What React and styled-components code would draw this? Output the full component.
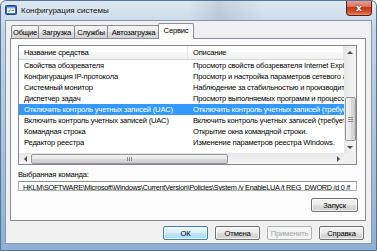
import React from 'react'
import styled, { createGlobalStyle, css } from 'styled-components'

const GlobalStyle = createGlobalStyle`
    html, body {
        margin: 0;
        padding: 0;
        overflow: hidden;
    }
    body {
        font-family: "Liberation Sans", Arial, sans-serif;
        font-size: 7.6px;
        letter-spacing: -0.2px;
        color: #000;
    }
`

const TABS = [
    { id: 'general', label: 'Общие', width: 28 },
    { id: 'boot', label: 'Загрузка', width: 37 },
    { id: 'services', label: 'Службы', width: 34 },
    { id: 'startup', label: 'Автозагрузка', width: 53 },
    { id: 'tools', label: 'Сервис', width: 33, active: true },
]

const TOOLS = [
    { name: 'Свойства обозревателя', desc: 'Просмотр свойств обозревателя Internet Explorer' },
    { name: 'Конфигурация IP-протокола', desc: 'Просмотр и настройка параметров сетевого адаптера' },
    { name: 'Системный монитор', desc: 'Наблюдение за стабильностью и производительностью' },
    { name: 'Диспетчер задач', desc: 'Просмотр выполняемых программ и процессов и их' },
    { name: 'Отключить контроль учетных записей (UAC)', desc: 'Отключить контроль учетных записей (требуется перезагрузка)', selected: true },
    { name: 'Включить контроль учетных записей (UAC)', desc: 'Включить контроль учетных записей (требуется перезагрузка)' },
    { name: 'Командная строка', desc: 'Открытие окна командной строки.' },
    { name: 'Редактор реестра', desc: 'Изменение параметров реестра Windows.' },
]

const COMMAND = 'HKLM\\SOFTWARE\\Microsoft\\Windows\\CurrentVersion\\Policies\\System /v EnableLUA /t REG_DWORD /d 0 /f'

const Window = styled.div`
    width: 377px;
    height: 251px;
    box-sizing: border-box;
    display: flex;
    flex-direction: column;
    border: 1px solid #54769c;
    border-radius: 6px 6px 0 0;
    background: linear-gradient(180deg, #dfe8f1 0%, #c3d4e6 12%, #aac3dd 55%, #8fb0d3 100%);
    overflow: hidden;
`

const TitleBar = styled.div`
    height: 19px;
    display: flex;
    align-items: flex-start;
    flex-shrink: 0;
    background: linear-gradient(90deg, rgba(255,255,255,0) 0%, rgba(255,255,255,0) 50%, rgba(120,140,160,0.25) 58%, rgba(255,255,255,0) 70%);
`

const AppIcon = styled.svg`
    width: 12px;
    height: 12px;
    margin: 3px 4px 0 4px;
    flex-shrink: 0;
`

const Title = styled.div`
    font-size: 8px;
    letter-spacing: 0;
    line-height: 19px;
    color: #111;
    text-shadow: 0 0 6px rgba(255,255,255,0.9);
`

const CloseButton = styled.div`
    margin-left: auto;
    margin-right: 4px;
    margin-top: -1px;
    width: 26px;
    height: 16px;
    box-sizing: border-box;
    border: 1px solid #5b1f1a;
    border-top: none;
    border-radius: 0 0 4px 4px;
    background: linear-gradient(180deg, #e9a799 0%, #d9735f 45%, #c2391c 50%, #d3552f 80%, #e88d5c 100%);
    display: flex;
    align-items: center;
    justify-content: center;
    color: #fff;
    font-family: "DejaVu Sans", sans-serif;
    font-weight: bold;
    font-size: 9px;
    letter-spacing: 0;
    text-shadow: 0 0 2px #5b1f1a;
`

const Client = styled.div`
    flex: 1;
    margin: 0 4px 6px 4px;
    background: #f0f0f0;
    border: 1px solid #8397ad;
    display: flex;
    flex-direction: column;
    padding: 2px 5px 3px 4px;
    min-height: 0;
`

const TabStrip = styled.div`
    display: flex;
    align-items: flex-end;
    height: 15px;
    padding-left: 2px;
    position: relative;
    z-index: 1;
`

const Tab = styled.div`
    box-sizing: border-box;
    height: 13px;
    width: ${p => p.$width}px;
    margin-left: -1px;
    border: 1px solid #898c95;
    border-bottom: none;
    border-radius: 2px 2px 0 0;
    background: linear-gradient(180deg, #f3f3f3 0%, #ebebeb 45%, #dedede 50%, #d3d3d3 100%);
    display: flex;
    align-items: center;
    justify-content: center;
    white-space: nowrap;

    ${p => p.$active && css`
        height: 16px;
        width: ${p.$width + 3}px;
        margin-left: -2px;
        margin-right: -1px;
        margin-bottom: -1px;
        background: #fcfcfc;
        padding-bottom: 2px;
        z-index: 2;
    `}
`

const Panel = styled.div`
    flex: 1;
    display: flex;
    flex-direction: column;
    background: #fcfcfc;
    border: 1px solid #898c95;
    padding: 6px 8px 8px 7px;
    min-height: 0;
`

const ListView = styled.div`
    height: 120px;
    box-sizing: border-box;
    border: 1px solid #828790;
    background: #fff;
    display: grid;
    grid-template-columns: 1fr 12px;
    grid-template-rows: 1fr 11px;
    flex-shrink: 0;
`

const ListBody = styled.div`
    overflow: hidden;
    min-width: 0;
`

const HeaderRow = styled.div`
    display: flex;
    height: 14px;
    box-sizing: border-box;
    border-bottom: 1px solid #d5d5d5;
    background: linear-gradient(180deg, #ffffff 0%, #ffffff 50%, #f7f8fa 50%, #f1f2f4 100%);
`

const HeaderCell = styled.div`
    width: ${p => p.$width ? `${p.$width}px` : 'auto'};
    flex: ${p => p.$width ? '0 0 auto' : 1};
    box-sizing: border-box;
    padding-left: 5px;
    line-height: 13px;
    border-right: 1px solid #e3e4e6;
    white-space: nowrap;
`

const Row = styled.div`
    display: flex;
    height: 11px;
    line-height: 11px;
    white-space: nowrap;
    background: ${p => p.$selected ? '#3399ff' : 'transparent'};
    color: ${p => p.$selected ? '#fff' : '#000'};
`

const Cell = styled.div`
    width: ${p => p.$width ? `${p.$width}px` : 'auto'};
    flex: ${p => p.$width ? '0 0 auto' : 1};
    box-sizing: border-box;
    padding-left: 5px;
    overflow: hidden;
`

const ScrollTrack = styled.div`
    display: flex;
    flex-direction: ${p => p.$vertical ? 'column' : 'row'};
    align-items: center;
    background: ${p => p.$vertical
        ? 'linear-gradient(90deg, #e7e7e7 0%, #f5f5f5 100%)'
        : 'linear-gradient(180deg, #e7e7e7 0%, #f5f5f5 100%)'};
`

const Arrow = styled.div`
    width: 12px;
    height: ${p => p.$vertical ? '12px' : '11px'};
    display: flex;
    align-items: center;
    justify-content: center;
    flex-shrink: 0;
`

const Thumb = styled.div`
    box-sizing: border-box;
    border: 1px solid #979797;
    border-radius: 2px;
    display: flex;
    align-items: center;
    justify-content: center;
    ${p => p.$vertical ? css`
        width: 11px;
        height: ${p.$size}px;
        background: linear-gradient(90deg, #f3f3f3 0%, #e8e8e8 50%, #d8d8d8 51%, #d0d0d0 100%);
    ` : css`
        height: 10px;
        width: ${p.$size}px;
        background: linear-gradient(180deg, #f3f3f3 0%, #e8e8e8 50%, #d8d8d8 51%, #d0d0d0 100%);
    `}
`

const Spacer = styled.div`
    flex: 1;
`

const Grip = styled.div`
    display: flex;
    flex-direction: ${p => p.$vertical ? 'column' : 'row'};
    gap: 1px;

    & > span {
        display: block;
        background: #8a8a8a;
        width: ${p => p.$vertical ? '5px' : '1px'};
        height: ${p => p.$vertical ? '1px' : '4px'};
    }
`

const Corner = styled.div`
    background: #f0f0f0;
`

const FieldLabel = styled.div`
    margin-top: 5px;
    line-height: 10px;
    height: 10px;
`

const TextBox = styled.div`
    margin-top: 1px;
    height: 14px;
    box-sizing: border-box;
    border: 1px solid #abadb3;
    border-top-color: #8e8f8f;
    background: #fff;
    padding-left: 4px;
    line-height: 12px;
    white-space: nowrap;
    overflow: hidden;
    font-size: 7.3px;
    letter-spacing: -0.28px;
`

const Button = styled.div`
    width: ${p => p.$width || 45}px;
    height: 14px;
    box-sizing: border-box;
    border: 1px solid #707070;
    border-radius: 2px;
    background: linear-gradient(180deg, #f2f2f2 0%, #ebebeb 48%, #dddddd 52%, #cfcfcf 100%);
    box-shadow: inset 0 0 0 1px rgba(255,255,255,0.7);
    display: flex;
    align-items: center;
    justify-content: center;
    flex-shrink: 0;

    ${p => p.$default && css`
        border-color: #3c7fb1;
        background: linear-gradient(180deg, #eaf6fd 0%, #d9f0fc 48%, #bee6fd 52%, #a7d9f5 100%);
        box-shadow: inset 0 0 0 1px rgba(255,255,255,0.8);
    `}

    ${p => p.$disabled && css`
        border-color: #adb2b5;
        background: #f4f4f4;
        color: #a3a3a3;
        box-shadow: none;
    `}
`

const RunRow = styled.div`
    display: flex;
    justify-content: flex-end;
    margin-top: 7px;
    margin-right: -1px;
`

const Footer = styled.div`
    display: flex;
    justify-content: flex-end;
    gap: 7px;
    padding-top: 5px;
    padding-right: 2px;
`

const Tri = ({ dir }) => {
    const pts = {
        up: '1,4 4,1 7,4',
        down: '1,1 4,4 7,1',
        left: '4,1 1,4 4,7',
        right: '1,1 4,4 1,7',
    }[dir]
    const vertical = dir === 'up' || dir === 'down'
    return (
        <svg width={vertical ? 8 : 5} height={vertical ? 5 : 8} viewBox={vertical ? '0 0 8 5' : '0 0 5 8'}>
            <polygon points={pts} fill="#4d4d4d" />
        </svg>
    )
}

const App = () => {
    return (
        <>
            <GlobalStyle />
            <Window>
                <TitleBar>
                    <AppIcon viewBox="0 0 12 12">
                        <rect x="0.5" y="1.5" width="11" height="9" rx="1" fill="#3f6fb0" stroke="#24487a" />
                        <rect x="2" y="3" width="8" height="6" fill="#ffffff" />
                        <rect x="2" y="3" width="8" height="1.5" fill="#7fb0e8" />
                        <path d="M3 6.5 L4 7.5 L5.5 5.5" stroke="#2a8a2a" strokeWidth="1" fill="none" />
                        <rect x="6.5" y="6" width="2.5" height="1" fill="#888" />
                    </AppIcon>
                    <Title>Конфигурация системы</Title>
                    <CloseButton>x</CloseButton>
                </TitleBar>

                <Client>
                    <TabStrip>
                        {TABS.map(tab => (
                            <Tab key={tab.id} $width={tab.width} $active={tab.active}>
                                {tab.label}
                            </Tab>
                        ))}
                    </TabStrip>

                    <Panel>
                        <ListView>
                            <ListBody>
                                <HeaderRow>
                                    <HeaderCell $width={169}>Название средства</HeaderCell>
                                    <HeaderCell>Описание</HeaderCell>
                                </HeaderRow>
                                {TOOLS.map((item, i) => (
                                    <Row key={`tool-${i}`} $selected={item.selected}>
                                        <Cell $width={169}>{item.name}</Cell>
                                        <Cell>{item.desc}</Cell>
                                    </Row>
                                ))}
                            </ListBody>

                            <ScrollTrack $vertical>
                                <Arrow $vertical><Tri dir="up" /></Arrow>
                                <Spacer />
                                <Thumb $vertical $size={44}>
                                    <Grip $vertical><span /><span /><span /></Grip>
                                </Thumb>
                                <Arrow $vertical><Tri dir="down" /></Arrow>
                            </ScrollTrack>

                            <ScrollTrack>
                                <Arrow><Tri dir="left" /></Arrow>
                                <Thumb $size={197}>
                                    <Grip><span /><span /><span /></Grip>
                                </Thumb>
                                <Spacer />
                                <Arrow><Tri dir="right" /></Arrow>
                            </ScrollTrack>

                            <Corner />
                        </ListView>

                        <FieldLabel>Выбранная команда:</FieldLabel>
                        <TextBox>{COMMAND}</TextBox>

                        <RunRow>
                            <Button $width={47}>Запуск</Button>
                        </RunRow>
                    </Panel>

                    <Footer>
                        <Button $default>ОК</Button>
                        <Button>Отмена</Button>
                        <Button $disabled>Применить</Button>
                        <Button>Справка</Button>
                    </Footer>
                </Client>
            </Window>
        </>
    )
}

export default App
